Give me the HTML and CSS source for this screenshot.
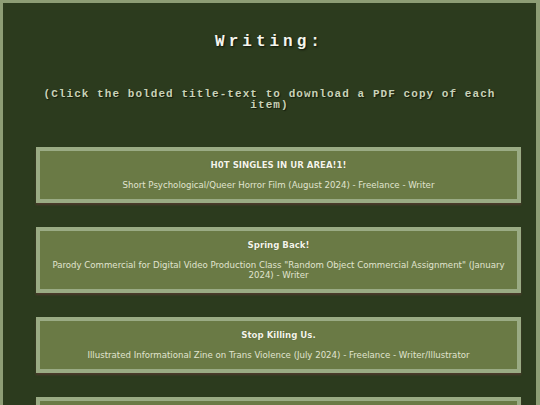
FILE: index.html
```html
<!DOCTYPE html>
<html lang="en">
<head>
<meta charset="utf-8">
<title>Writing</title>
<link rel="stylesheet" href="styles.css">
</head>
<body>
<div class="frame">
  <h1 class="page-title">Writing:</h1>
  <p class="note">(Click the bolded title-text to download a PDF copy of each item)</p>
  <div class="list">
    <div class="card">
      <a class="card-title" href="#">H0T SINGLES IN UR AREA!1!</a>
      <p class="card-desc">Short Psychological/Queer Horror Film (August 2024) - Freelance - Writer</p>
    </div>
    <div class="card">
      <a class="card-title" href="#">Spring Back!</a>
      <p class="card-desc">Parody Commercial for Digital Video Production Class "Random Object Commercial Assignment" (January 2024) - Writer</p>
    </div>
    <div class="card">
      <a class="card-title" href="#">Stop Killing Us.</a>
      <p class="card-desc">Illustrated Informational Zine on Trans Violence (July 2024) - Freelance - Writer/Illustrator</p>
    </div>
    <div class="card">
      <a class="card-title" href="#">Untitled</a>
      <p class="card-desc">Short Story - Writer</p>
    </div>
  </div>
</div>
</body>
</html>
```

FILE: styles.css
```css
html, body {
  margin: 0;
  padding: 0;
  background: #2c3b1e;
}
.frame {
  border: 3px solid #8d9d75;
  border-right-width: 4px;
  background: #2c3b1e;
  min-height: 600px;
  padding-top: 28px;
}
.page-title {
  margin: 0;
  text-align: center;
  font-family: "Liberation Mono", monospace;
  font-weight: bold;
  font-size: 16px;
  letter-spacing: 4px;
  line-height: 22px;
  color: #f6f6ee;
  text-shadow: 1px 1px 2px #0e140a;
}
.note {
  margin: 36px 36px 0 36px;
  text-align: center;
  font-family: "Liberation Mono", monospace;
  font-weight: bold;
  font-size: 11px;
  letter-spacing: 1.06px;
  line-height: 11px;
  color: #c9d2b8;
  text-shadow: 1px 1px 1px #141c0c;
}
.list {
  display: flex;
  flex-direction: column;
  gap: 24px;
  margin: 36px 0 0 33px;
  width: 485px;
}
.card {
  background: #6a7a45;
  border: 4px solid #9aab84;
  box-shadow: 0 2px 2px #4d3a2c;
  padding: 9px 12px;
  text-align: center;
  font-family: "DejaVu Sans", Verdana, sans-serif;
  font-size: 8.6px;
  line-height: 10px;
}
.card-title {
  display: block;
  font-weight: bold;
  color: #f4f4e8;
  text-decoration: none;
  text-shadow: 0 0 1px #3e4a26;
}
.card-desc {
  margin: 10px 0 0 0;
  color: #e0e4d0;
}
```
